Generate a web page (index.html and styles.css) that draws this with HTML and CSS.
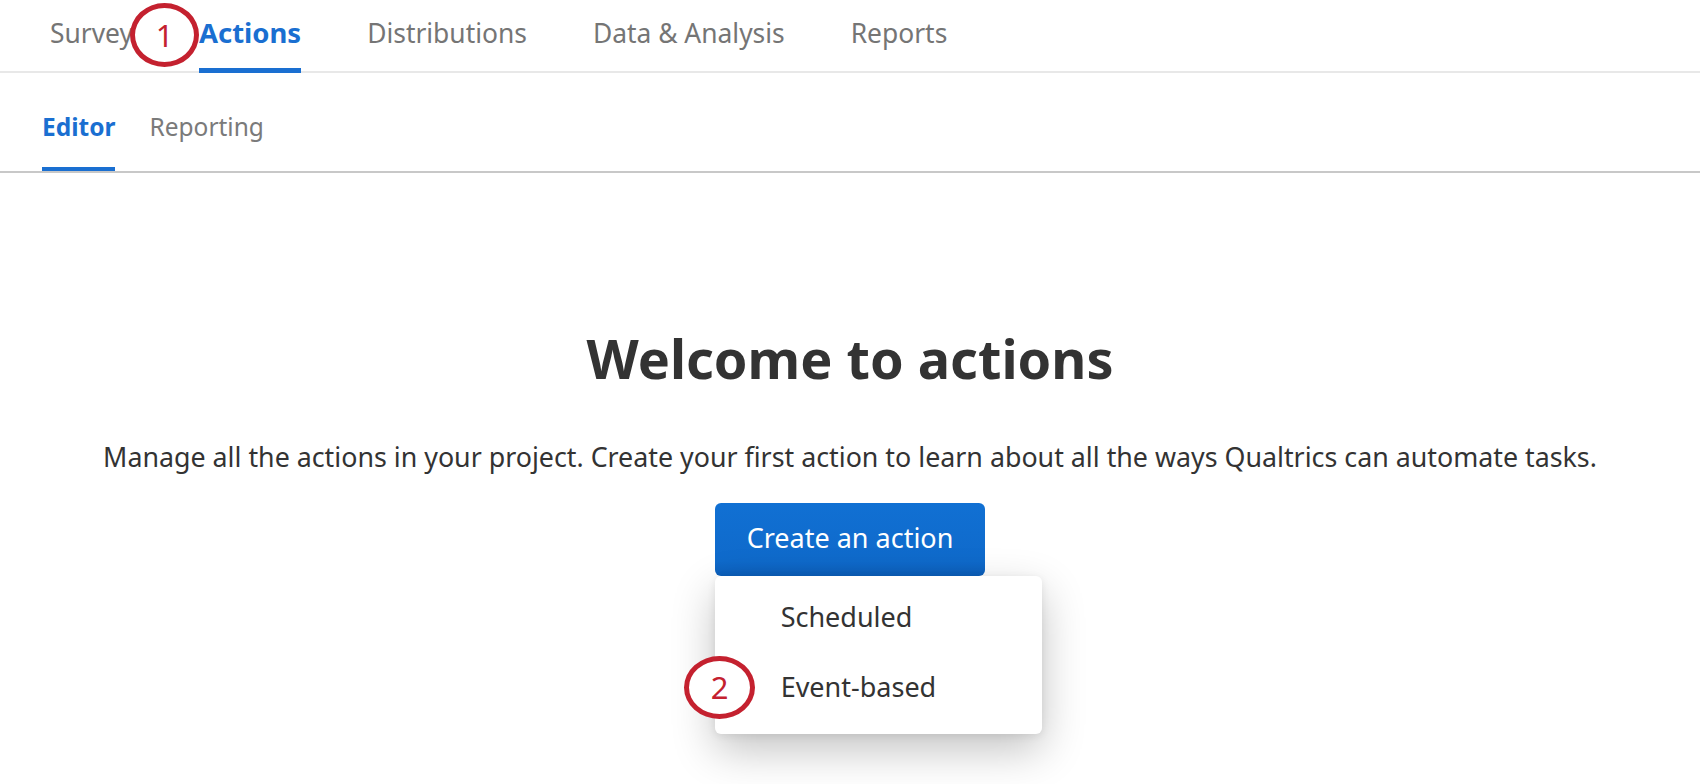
FILE: index.html
```html
<!DOCTYPE html>
<html lang="en">
<head>
  <meta charset="UTF-8">
  <meta name="viewport" content="width=device-width, initial-scale=1.0">
  <title>Actions - Editor</title>
  <link rel="stylesheet" href="styles.css">
</head>
<body>
  <!-- Project tabs -->
  <nav class="project-tabs">
    <a class="project-tab" href="#">Survey</a>
    <a class="project-tab active" href="#">Actions</a>
    <a class="project-tab" href="#">Distributions</a>
    <a class="project-tab" href="#">Data &amp; Analysis</a>
    <a class="project-tab" href="#">Reports</a>
  </nav>

  <!-- Sub tabs -->
  <nav class="sub-tabs">
    <a class="sub-tab active" href="#">Editor</a>
    <a class="sub-tab" href="#">Reporting</a>
  </nav>

  <main class="welcome">
    <h1 class="welcome-title">Welcome to actions</h1>
    <p class="welcome-text">Manage all the actions in your project. Create your first action to learn about all the ways Qualtrics can automate tasks.</p>

    <div class="create-menu">
      <button class="create-btn">Create an action</button>
      <ul class="dropdown">
        <li>Scheduled</li>
        <li>Event-based</li>
      </ul>
    </div>
  </main>

  <!-- step callouts -->
  <span class="callout callout-one">1</span>
  <span class="callout callout-two">2</span>
</body>
</html>
```

FILE: styles.css
```css
body {
  font-family: "Noto Sans", "Open Sans", sans-serif;
  margin: 0;
  padding: 0;
  background: #fff;
  color: #333;
  position: relative;
  min-height: 784px;
  overflow: hidden;
}

a {
  text-decoration: none;
}

/* top tabs */
.project-tabs {
  display: flex;
  gap: 66px;
  padding-left: 50px;
  border-bottom: 2px solid #e8e8e8;
  height: 71px;
}
.project-tab {
  font-size: 26.4px;
  line-height: 30px;
  padding-top: 18px;
  height: 30px;
  padding-bottom: 20px;
  border-bottom: 5px solid transparent;
  color: #757575;
}
.project-tab.active {
  color: #1a6fd1;
  font-weight: 700;
  font-size: 27.5px;
  border-bottom-color: #1a6fd1;
}

/* editor / reporting */
.sub-tabs {
  display: flex;
  gap: 34px;
  padding-left: 42px;
  border-bottom: 2px solid #c8c8c8;
  height: 100px;
  box-sizing: border-box;
}
.sub-tab {
  font-size: 24.5px;
  line-height: 30px;
  padding-top: 39px;
  padding-bottom: 25px;
  border-bottom: 4px solid transparent;
  color: #7a7a7a;
}
.sub-tab.active {
  color: #1a6fd1;
  font-weight: 700;
  border-bottom-color: #1a6fd1;
}

/* empty state */
.welcome {
  text-align: center;
  padding-top: 153px;
}
.welcome-title {
  font-size: 54px;
  line-height: 65px;
  font-weight: 700;
  color: #333;
  margin: 0;
}
.welcome-text {
  font-size: 26.8px;
  line-height: 36px;
  color: #333;
  margin: 48px 0 0;
}
.create-menu {
  position: relative;
  display: inline-block;
  margin-top: 28px;
}
.create-btn {
  font-family: inherit;
  font-size: 27px;
  line-height: 37px;
  padding: 16px 32px 20px;
  border: none;
  border-radius: 6px;
  color: #fff;
  background: linear-gradient(180deg, #1170d3 0%, #0f6acb 80%, #0c5fbb 100%);
  cursor: pointer;
  display: block;
}
.dropdown {
  position: absolute;
  top: 100%;
  left: 0;
  width: 327px;
  margin: 0;
  padding: 6px 0 12px;
  list-style: none;
  background: #fff;
  border-radius: 6px;
  box-shadow: 0 16px 44px rgba(0, 0, 0, 0.24), 0 2px 8px rgba(0, 0, 0, 0.08);
  text-align: left;
}
.dropdown li {
  font-size: 27px;
  line-height: 70px;
  padding-left: 66px;
  color: #333;
}

/* red numbered circles */
.callout {
  position: absolute;
  box-sizing: border-box;
  border: 5px solid #c4212f;
  border-radius: 50%;
  color: #c4212f;
  font-size: 31px;
  line-height: 1;
  display: flex;
  align-items: center;
  justify-content: center;
  background: #fff;
}
.callout-one {
  left: 130px;
  top: 3px;
  width: 69px;
  height: 64px;
}
.callout-two {
  left: 684px;
  top: 656px;
  width: 71px;
  height: 63px;
}
```
